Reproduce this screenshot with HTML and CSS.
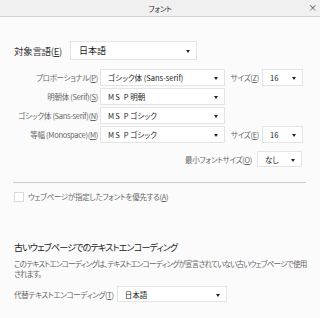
FILE: index.html
```html
<!DOCTYPE html>
<html lang="ja">
<head>
	<meta charset="UTF-8">
	<title>フォント</title>
<link rel="stylesheet" href="styles.css">
</head>
<body>
	<div class="titlebar">
		<span class="title">フォント</span>
		<span class="close">×</span>
	</div>
	<div class="content">
		<div class="lang_row">
			<span class="lang_label">対象言語(<u>E</u>)</span>
			<div class="dropdown lang_box">日本語<i class="arrow"></i></div>
		</div>

		<div class="font_grid">
			<span class="label">プロポーショナル(<u>P</u>)</span>
			<div class="dropdown">ゴシック体 (Sans-serif)<i class="arrow"></i></div>
			<span class="size_label">サイズ(<u>Z</u>)</span>
			<div class="dropdown">16<i class="arrow"></i></div>

			<span class="label">明朝体 (Serif)(<u>S</u>)</span>
			<div class="dropdown"><span class="ms">MS P</span>明朝<i class="arrow"></i></div>
			<span></span><span></span>

			<span class="label">ゴシック体 (Sans-serif)(<u>N</u>)</span>
			<div class="dropdown"><span class="ms">MS P</span>ゴシック<i class="arrow"></i></div>
			<span></span><span></span>

			<span class="label">等幅 (Monospace)(<u>M</u>)</span>
			<div class="dropdown"><span class="ms">MS P</span>ゴシック<i class="arrow"></i></div>
			<span class="size_label">サイズ(<u>E</u>)</span>
			<div class="dropdown">16<i class="arrow"></i></div>
		</div>

		<div class="min_row">
			<span class="label">最小フォントサイズ(<u>O</u>)</span>
			<div class="dropdown min_box">なし<i class="arrow"></i></div>
		</div>

		<hr class="separator">

		<div class="check_row">
			<span class="checkbox"></span>
			<span class="label">ウェブページが指定したフォントを優先する(<u>A</u>)</span>
		</div>

		<h2>古いウェブページでのテキストエンコーディング</h2>
		<p class="desc">このテキストエンコーディングは、テキストエンコーディングが宣言されていない古いウェブページで使用されます。</p>

		<div class="enc_row">
			<span class="label">代替テキストエンコーディング(<u>T</u>)</span>
			<div class="dropdown enc_box">日本語<i class="arrow"></i></div>
		</div>
	</div>
</body>
</html>
```

FILE: styles.css
```css
body {
	margin: 0;
	width: 320px;
	height: 318px;
	overflow: hidden;
	background-color: #fbfbfb;
	font-family: "Noto Sans CJK JP", "Liberation Sans", sans-serif;
	font-feature-settings: "palt";
	font-size: 7.5px;
	letter-spacing: -0.3px;
	color: #666;
}
u {
	text-decoration: underline;
}

.titlebar {
	height: 16px;
	background-color: #f0f0f0;
	border-bottom: 1px solid #d4d4d4;
	display: flex;
	align-items: center;
	justify-content: center;
	position: relative;
}
.title {
	font-size: 7.5px;
	color: #333;
}
.close {
	position: absolute;
	right: 3px;
	top: 1px;
	font-size: 9px;
	color: #444;
}

.content {
	padding: 0 14px 0 14px;
	display: flex;
	flex-direction: column;
}

.dropdown {
	position: relative;
	display: flex;
	align-items: center;
	height: 16px;
	padding-left: 7px;
	background-color: #fff;
	border: 1px solid #e4e4e4;
	box-sizing: border-box;
	color: #222;
	font-size: 7.5px;
	letter-spacing: 0;
	white-space: nowrap;
	overflow: hidden;
}
.ms {
	letter-spacing: 1.2px;
	margin-right: 0.5px;
}
.arrow {
	position: absolute;
	right: 6px;
	top: 7px;
	border-left: 2.5px solid transparent;
	border-right: 2.5px solid transparent;
	border-top: 3px solid #222;
}

.lang_row {
	margin-top: 24px;
	display: flex;
	align-items: center;
	height: 19px;
}
.lang_label {
	font-size: 9.5px;
	color: #333;
	width: 56px;
}
.lang_box {
	width: 127px;
	height: 19px;
	font-size: 9px;
	padding-left: 8px;
}
.lang_box .arrow {
	top: 8px;
}

.font_grid {
	margin-top: 9px;
	display: grid;
	grid-template-columns: 84px 125px 33px 41px;
	column-gap: 2px;
	row-gap: 2px;
	grid-auto-rows: 17px;
	align-items: center;
}
.font_grid .dropdown {
	height: 17px;
}
.label {
	text-align: right;
	white-space: nowrap;
}
.size_label {
	text-align: right;
	white-space: nowrap;
	padding-right: 1px;
}

.min_row {
	margin-top: 8px;
	display: flex;
	justify-content: flex-end;
	align-items: center;
	gap: 5px;
	padding-right: 4px;
}
.min_box {
	width: 45px;
}

.separator {
	margin: 15px 0 0 -1px;
	width: 293px;
	height: 0;
	border: 0;
	border-top: 1px solid #c8c8c8;
}

.check_row {
	margin-top: 8px;
	display: flex;
	align-items: center;
	gap: 4px;
}
.checkbox {
	width: 10px;
	height: 10px;
	box-sizing: border-box;
	border: 1px solid #d8d8d8;
	background-color: #fff;
}

h2 {
	margin: 39px 0 0 0;
	font-size: 9px;
	letter-spacing: -0.8px;
	font-weight: normal;
	color: #222;
	line-height: 14px;
}
.desc {
	margin: 4px -2px 0 0;
	line-height: 10px;
	letter-spacing: -0.75px;
}

.enc_row {
	margin-top: 7px;
	display: flex;
	align-items: center;
	gap: 3px;
}
.enc_box {
	width: 110px;
}
```
